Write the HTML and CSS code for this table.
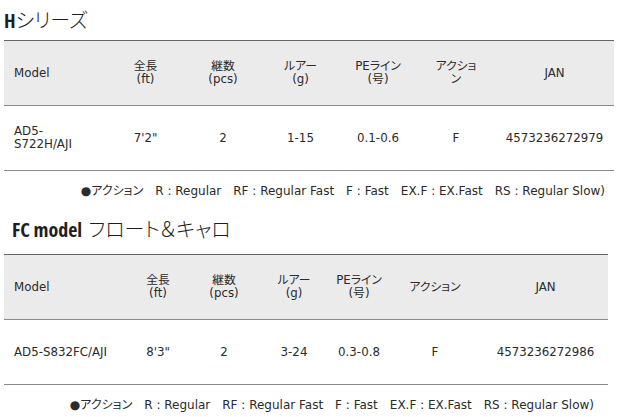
FILE: index.html
```html
<!DOCTYPE html>
<html lang="ja">
<head>
<meta charset="utf-8">
<title>Spec</title>
<link rel="stylesheet" href="styles.css">
</head>
<body>
<section class="series">
  <h2 class="title"><span class="title-en">H</span><span class="title-ja">シリーズ</span></h2>
  <div class="spec spec--h">
    <div class="row head">
      <div class="cell cell--model">Model</div>
      <div class="cell">全長<br>(ft)</div>
      <div class="cell">継数<br>(pcs)</div>
      <div class="cell">ルアー<br>(g)</div>
      <div class="cell">PEライン<br>(号)</div>
      <div class="cell">アクショ<br>ン</div>
      <div class="cell">JAN</div>
    </div>
    <div class="row">
      <div class="cell cell--model">AD5-S722H/AJI</div>
      <div class="cell">7'2"</div>
      <div class="cell">2</div>
      <div class="cell">1-15</div>
      <div class="cell">0.1-0.6</div>
      <div class="cell">F</div>
      <div class="cell">4573236272979</div>
    </div>
  </div>
  <p class="legend legend--h">●アクション　R : Regular　RF : Regular Fast　F : Fast　EX.F : EX.Fast　RS : Regular Slow)</p>
</section>
<section class="series">
  <h2 class="title title--fc"><span class="title-en">FC model</span> <span class="title-ja">フロート＆キャロ</span></h2>
  <div class="spec spec--fc">
    <div class="row head">
      <div class="cell cell--model">Model</div>
      <div class="cell">全長<br>(ft)</div>
      <div class="cell">継数<br>(pcs)</div>
      <div class="cell">ルアー<br>(g)</div>
      <div class="cell">PEライン<br>(号)</div>
      <div class="cell">アクション</div>
      <div class="cell">JAN</div>
    </div>
    <div class="row">
      <div class="cell cell--model">AD5-S832FC/AJI</div>
      <div class="cell">8'3"</div>
      <div class="cell">2</div>
      <div class="cell">3-24</div>
      <div class="cell">0.3-0.8</div>
      <div class="cell">F</div>
      <div class="cell">4573236272986</div>
    </div>
  </div>
  <p class="legend legend--fc">●アクション　R : Regular　RF : Regular Fast　F : Fast　EX.F : EX.Fast　RS : Regular Slow)</p>
</section>
</body>
</html>
```

FILE: styles.css
```css
html, body {
  margin: 0;
  padding: 0;
  background: #fff;
}
body {
  color: #2a2a2a;
  font-family: "DejaVu Sans", "Noto Sans CJK JP", sans-serif;
  font-size: 11.8px;
  font-feature-settings: "palt";
}
.series {
  margin: 0;
}
.title {
  margin: 0;
  height: 40px;
  line-height: 40px;
  padding-left: 4px;
  font-size: 20px;
  font-weight: normal;
  color: #1e1e1e;
  white-space: nowrap;
}
.title--fc {
  height: 36px;
  line-height: 36px;
  margin-top: 0;
  margin-bottom: 7px;
  padding-left: 12px;
}
.title-en {
  font-family: "Open Sans", "Liberation Sans", sans-serif;
  font-weight: 700;
  font-stretch: 75%;
  font-size: 20px;
}
.title-ja {
  font-family: "Noto Sans CJK JP", sans-serif;
  font-weight: 300;
  font-size: 20px;
}
.spec {
  margin-left: 4px;
  border-top: 1px solid #666;
}
.spec--h { width: 610px; }
.spec--fc { width: 604px; }
.row {
  display: grid;
  height: 64px;
  align-items: center;
  border-bottom: 1px solid #8a8a8a;
}
.spec--h .row {
  grid-template-columns: 103px 77px 78px 77px 78px 78px 119px;
}
.spec--fc .row {
  grid-template-columns: 121px 66px 66px 74px 56px 96px 125px;
}
.head {
  background: #ebebeb;
}
.cell {
  text-align: center;
  line-height: 13px;
  padding: 0 4px;
}
.cell--model {
  text-align: left;
  padding: 0 8px 0 10px;
}
.legend {
  margin: 0;
  height: 40px;
  line-height: 40px;
  text-align: right;
  white-space: nowrap;
  font-size: 12px;
}
.legend--h {
  width: 605px;
}
.legend--fc {
  width: 594px;
}
```
